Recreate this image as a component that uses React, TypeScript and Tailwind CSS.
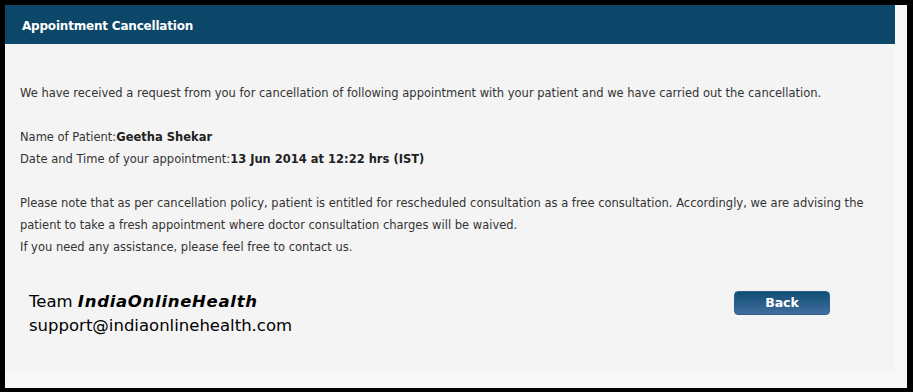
const bodyFont = "font-['DejaVu_Sans',sans-serif]";

const App = () => {
  return (
    <div className="w-[913px] h-[392px] bg-black pt-[5px] pl-[5px]">
      <div className="w-[902px] h-[383px] bg-[#f8f8f8]">
        <div className={`w-[890px] h-[367px] bg-[#f4f4f4] ${bodyFont}`}>
          <div className="h-[39px] bg-[#0c4669] flex items-center px-[17px] pt-[3px]">
            <span className="text-white font-bold text-[12px] tracking-[-0.2px]">Appointment Cancellation</span>
          </div>
          <div className="px-[15px] pt-[38px] text-[11.5px] leading-[22px] text-[#333]">
            <p>
              We have received a request from you for cancellation of following appointment with your patient and we
              have carried out the cancellation.
            </p>
            <br />
            <p>
              Name of Patient:<b className="text-[#222]">Geetha Shekar</b>
            </p>
            <p>
              Date and Time of your appointment:<b className="text-[#222]">13 Jun 2014 at 12:22 hrs (IST)</b>
            </p>
            <br />
            <p>
              Please note that as per cancellation policy, patient is entitled for rescheduled consultation as a free
              consultation. Accordingly, we are advising the patient to take a fresh appointment where doctor consultation
              charges will be waived.
            </p>
            <p>If you need any assistance, please feel free to contact us.</p>
          </div>
          <div className="flex items-start mt-[32px] pl-[24px] pr-[65px]">
            <div className="text-[16.5px] leading-[24px] text-black">
              <p>
                Team <b className="italic tracking-[0.7px]">IndiaOnlineHealth</b>
              </p>
              <p>support@indiaonlinehealth.com</p>
            </div>
            <button className="ml-auto mt-[1px] w-[96px] h-[24px] rounded-[4px] border border-[#2d5f8c] bg-gradient-to-b from-[#0d4f74] to-[#3f6d9f] text-white font-bold text-[12.5px]">
              Back
            </button>
          </div>
        </div>
      </div>
    </div>
  );
};

export default App;
